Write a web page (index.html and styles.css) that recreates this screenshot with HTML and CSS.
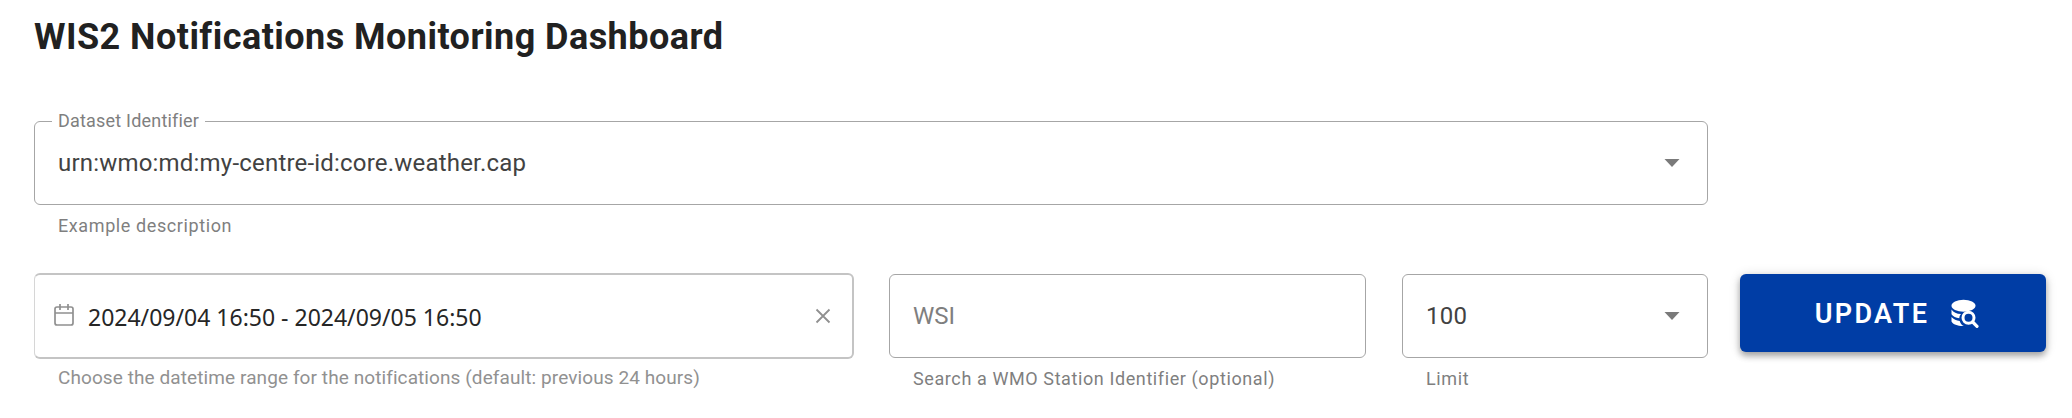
FILE: index.html
```html
<!DOCTYPE html>
<html lang="en">
<head>
<meta charset="utf-8">
<title>WIS2 Notifications Monitoring Dashboard</title>
<link rel="stylesheet" href="styles.css">
</head>
<body>
<main class="dashboard">
  <h1 class="title">WIS2 Notifications Monitoring Dashboard</h1>
  <section class="dataset">
    <div class="field">
      <span class="floating-label">Dataset Identifier</span>
      <span class="value urn">urn:wmo:md:my-centre-id:core.weather.cap</span>
      <svg class="caret" viewBox="0 0 16 8"><path d="M0.5 0h15L8 8z"/></svg>
    </div>
    <p class="hint hint-example">Example description</p>
  </section>
  <section class="filters">
    <div class="col-date">
      <div class="field date-field">
        <svg class="calendar" viewBox="0 0 20 22"><path d="M3 3h14a2 2 0 0 1 2 2v14a2 2 0 0 1-2 2H3a2 2 0 0 1-2-2V5a2 2 0 0 1 2-2zM1 9h18M6 0v6M14 0v6"/></svg>
        <span class="date-value">2024/09/04 16:50 - 2024/09/05 16:50</span>
        <svg class="clear" viewBox="0 0 16 16"><path d="M1.5 1.5l13 13M14.5 1.5l-13 13"/></svg>
      </div>
      <p class="hint hint-date">Choose the datetime range for the notifications (default: previous 24 hours)</p>
    </div>
    <div class="col-wsi">
      <div class="field"><span class="placeholder">WSI</span></div>
      <p class="hint hint-wsi">Search a WMO Station Identifier (optional)</p>
    </div>
    <div class="col-limit">
      <div class="field">
        <span class="value limit">100</span>
        <svg class="caret" viewBox="0 0 16 8"><path d="M0.5 0h15L8 8z"/></svg>
      </div>
      <p class="hint hint-limit">Limit</p>
    </div>
    <button class="update" type="button">
      <span class="update-text">UPDATE</span>
      <svg class="db-search" viewBox="0 0 28 30">
        <g class="db-body">
          <ellipse cx="12.5" cy="6.7" rx="12" ry="6"/>
          <path d="M.5 10.5c2 3 5 4.200 9.500 4.600-1.100 1.100-1.600 2.500-1.700 4.100C5 18.900 2 17.500.5 15.300z"/>
          <path d="M.5 18c2 2.400 5 3.500 8.200 3.900.6 2.200 1.900 4 4.100 5.100C7 27.200 2 25.500.5 22.500z"/>
        </g>
        <circle class="lens" cx="17.500" cy="18.800" r="5.500"/>
        <path class="handle" d="M21.700 23l4.300 4.300"/>
      </svg>
    </button>
  </section>
</main>
</body>
</html>
```
FILE: styles.css
```css
body {
  margin: 0;
  background: #fff;
  font-family: Roboto, "Liberation Sans", sans-serif;
}

.dashboard {
  box-sizing: border-box;
  width: 2072px;
  height: 418px;
  padding: 17px 26px 0 34px;
  overflow: hidden;
}

.title {
  margin: 0 0 63px;
  font-size: 36px;
  line-height: 41px;
  font-weight: 700;
  letter-spacing: 0.46px;
  color: #212121;
  white-space: nowrap;
}

.dataset {
  width: 1674px;
  height: 153px;
}

.field {
  position: relative;
  box-sizing: border-box;
  display: flex;
  align-items: center;
  height: 84px;
  padding: 0 27px 0 23px;
  border: 1px solid #a6a6a6;
  border-radius: 6px;
}

.floating-label {
  position: absolute;
  top: -13px;
  left: 17px;
  padding: 0 6px;
  background: #fff;
  font-size: 18px;
  line-height: 24px;
  letter-spacing: 0.2px;
  color: #7f7f7f;
  white-space: nowrap;
}

.value {
  flex: 1;
  font-size: 24px;
  color: #424242;
  white-space: nowrap;
}

.urn {
  letter-spacing: 0.2px;
}

.limit {
  letter-spacing: 0.3px;
}

.caret {
  width: 16px;
  height: 8px;
  fill: #7a7a7a;
}

.placeholder {
  font-size: 24px;
  color: #7f7f7f;
}

.hint {
  margin: 9px 0 0 24px;
  font-size: 18px;
  line-height: 24px;
  letter-spacing: 0.6px;
  color: #7f7f7f;
  white-space: nowrap;
}

.filters {
  display: flex;
  align-items: flex-start;
}

.col-date {
  width: 820px;
  margin: -1px 35px 0 0;
}

.date-field {
  height: 86px;
  padding: 0 21px 0 19px;
  border: 2px solid #c4c4c4;
  border-left: 1px solid #d6d6d6;
}

.calendar {
  width: 20px;
  height: 22px;
  margin-right: 14px;
  margin-top: -3px;
  fill: none;
  stroke: #909090;
  stroke-width: 1.7;
}

.date-value {
  flex: 1;
  padding-top: 2px;
  font-family: "Noto Sans", "Open Sans", sans-serif;
  font-size: 23px;
  line-height: 32px;
  color: #262626;
  white-space: nowrap;
}

.clear {
  width: 16px;
  height: 16px;
  fill: none;
  stroke: #909090;
  stroke-width: 1.8;
}

.hint-date {
  margin-top: 7px;
  font-size: 19px;
  letter-spacing: 0.09px;
  color: #919191;
}

.col-wsi {
  width: 477px;
  margin-right: 36px;
}

.col-limit {
  width: 306px;
  margin-right: 32px;
}

.update {
  display: flex;
  align-items: center;
  justify-content: center;
  gap: 22px;
  width: 306px;
  height: 78px;
  padding: 2px 0 0 8px;
  border: 0;
  border-radius: 6px;
  background: #003da5;
  color: #fff;
  font-family: inherit;
  box-shadow: 0 4px 6px rgba(0, 0, 0, 0.3), 0 1px 12px rgba(0, 0, 0, 0.14);
}

.update-text {
  font-size: 27px;
  line-height: 32px;
  font-weight: 600;
  letter-spacing: 2.3px;
}

.db-search {
  width: 28px;
  height: 30px;
}

.db-body {
  fill: #fff;
}

.lens {
  fill: #003da5;
  stroke: #fff;
  stroke-width: 3;
}

.handle {
  stroke: #fff;
  stroke-width: 3.2;
  stroke-linecap: round;
}
```
